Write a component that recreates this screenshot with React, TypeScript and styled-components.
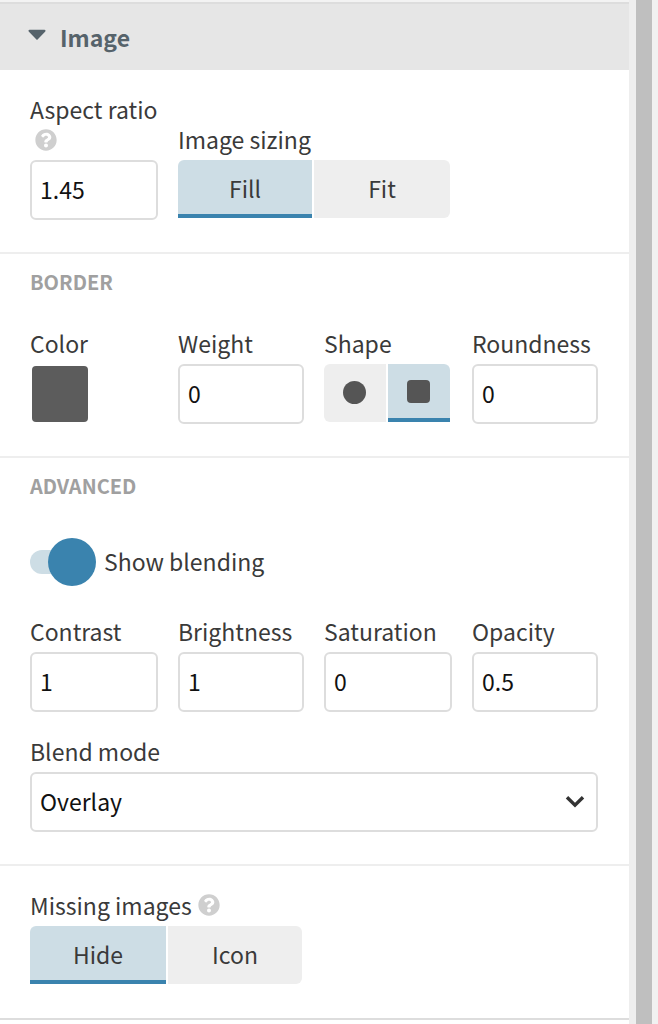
import React from "react";
import styled, { createGlobalStyle } from "styled-components";
import { FaQuestionCircle } from "react-icons/fa";

const Global = createGlobalStyle`
  html, body { margin: 0; padding: 0; background: #f5f5f5; height: 1024px; overflow: hidden; }
  body { font-family: "Noto Sans CJK JP", "Noto Sans", sans-serif; color: #333; }
  * { box-sizing: border-box; }
`;

const Page = styled.div`
  display: flex;
  width: 658px;
  height: 1024px;
  overflow: hidden;
`;

const Panel = styled.div`
  width: 629px;
  flex: none;
  background: #fff;
`;

const Gutter = styled.div`
  width: 7px;
  flex: none;
  background: #eeeeee;
`;

const Scrollbar = styled.div`
  width: 16px;
  flex: none;
  background: #bfbfbf;
`;

const Edge = styled.div`
  flex: 1;
  background: #f1f1f1;
`;

const TopStrip = styled.div`
  height: 4px;
  background: #f3f3f3;
  border-bottom: 2px solid #dddddd;
`;

const Header = styled.div`
  height: 66px;
  background: #e6e6e6;
  display: flex;
  align-items: center;
  padding: 0 0 1px 28px;
  gap: 14px;
  font-size: 23px;
  font-weight: 700;
  color: #56636b;
`;

const Section = styled.div<{ $top: number; $bottom: number; $last?: boolean }>`
  padding: ${(p) => p.$top}px 30px ${(p) => p.$bottom}px;
  border-bottom: 2px solid ${(p) => (p.$last ? "#dddddd" : "#eeeeee")};
`;

const Heading = styled.div`
  font-size: 20px;
  height: 30px;
  line-height: 28px;
  font-weight: 700;
  color: #a0a0a0;
`;

const FieldGrid = styled.div<{ $top?: number }>`
  display: grid;
  grid-template-columns: 128px 126px 128px 126px;
  column-gap: 20px;
  align-items: end;
  margin-top: ${(p) => p.$top ?? 0}px;
`;

const Field = styled.div<{ $span?: number; $top?: number }>`
  display: flex;
  flex-direction: column;
  grid-column: span ${(p) => p.$span ?? 1};
  margin-top: ${(p) => p.$top ?? 0}px;
`;

const Label = styled.div<{ $gap?: number }>`
  font-size: 23px;
  height: 30px;
  padding-bottom: 2px;
  color: #3a3a3a;
  margin-bottom: ${(p) => p.$gap ?? 5}px;
  display: flex;
  align-items: center;
  gap: 6px;
  white-space: nowrap;
`;

const HelpRow = styled.div`
  height: 30px;
  padding-left: 5px;
  margin-bottom: 5px;
  display: flex;
  align-items: center;
`;

const Input = styled.div`
  height: 60px;
  border: 2px solid #dddddd;
  border-radius: 6px;
  background: #fff;
  display: flex;
  align-items: center;
  padding: 0 0 2px 8px;
  font-size: 23px;
  color: #111;
`;

const Swatch = styled.div`
  width: 56px;
  height: 56px;
  margin: 2px 0 2px 2px;
  background: #5c5c5c;
  border-radius: 4px;
`;

const Segmented = styled.div<{ $width: number; $aligned?: boolean }>`
  display: flex;
  gap: 2px;
  width: ${(p) => p.$width}px;
  height: 58px;
  margin-bottom: ${(p) => (p.$aligned ? 2 : 0)}px;
`;

const Segment = styled.div<{ $active?: boolean; $first?: boolean; $grow: number }>`
  flex: ${(p) => p.$grow} 0 0;
  height: 58px;
  display: flex;
  align-items: center;
  justify-content: center;
  font-size: 23px;
  color: #3a3a3a;
  background: ${(p) => (p.$active ? "#cddde5" : "#eeeeee")};
  border-bottom: ${(p) => (p.$active ? "4px solid #3a83ae" : "none")};
  padding: ${(p) => (p.$active ? "2px 0 0" : "0 0 2px")};
  border-radius: ${(p) =>
    p.$first
      ? p.$active
        ? "6px 0 0 0"
        : "6px 0 0 6px"
      : p.$active
        ? "0 6px 0 0"
        : "0 6px 6px 0"};
`;

const Dot = styled.div`
  width: 23px;
  height: 23px;
  margin-right: 1px;
  border-radius: 50%;
  background: #555555;
`;

const Square = styled.div`
  width: 23px;
  height: 23px;
  margin: 0 1px 2px 0;
  border-radius: 4px;
  background: #555555;
`;

const ToggleRow = styled.div`
  display: flex;
  align-items: center;
  margin-top: 36px;
  height: 48px;
`;

const Track = styled.div`
  position: relative;
  width: 50px;
  height: 24px;
  border-radius: 12px;
  background: #cddde5;
`;

const Knob = styled.div`
  position: absolute;
  left: 18px;
  top: -12px;
  width: 48px;
  height: 48px;
  border-radius: 50%;
  background: #3a83ae;
`;

const ToggleLabel = styled.div`
  margin-left: 24px;
  padding-bottom: 3px;
  font-size: 23px;
  color: #3a3a3a;
`;

const Select = styled.div`
  height: 60px;
  border: 2px solid #dddddd;
  border-radius: 6px;
  display: flex;
  align-items: center;
  justify-content: space-between;
  padding: 0 11px 2px 8px;
  font-size: 23px;
  color: #111;
`;

const Help = () => <FaQuestionCircle size={22} color="#cfcfcf" />;

const Caret = () => (
  <svg width="18" height="11" viewBox="0 0 18 11" style={{ marginBottom: 4 }}>
    <path d="M1.5 0.8h15a1 1 0 0 1 .8 1.6l-7.5 7.8a1 1 0 0 1-1.6 0L.7 2.4a1 1 0 0 1 .8-1.6z" fill="#56636b" />
  </svg>
);

const Chevron = () => (
  <svg width="20" height="13" viewBox="0 0 20 13">
    <path d="M2 2.2l8 8 8-8" fill="none" stroke="#333" strokeWidth="3.4" />
  </svg>
);

export default function App() {
  return (
    <Page>
      <Global />
      <Panel>
        <TopStrip />
        <Header>
          <Caret />
          Image
        </Header>

        <Section $top={25} $bottom={32}>
          <FieldGrid>
            <Field>
              <Label $gap={0}>Aspect ratio</Label>
              <HelpRow>
                <Help />
              </HelpRow>
              <Input>1.45</Input>
            </Field>
            <Field $span={3}>
              <Label>Image sizing</Label>
              <Segmented $width={272} $aligned>
                <Segment $active $first $grow={134}>Fill</Segment>
                <Segment $grow={136}>Fit</Segment>
              </Segmented>
            </Field>
          </FieldGrid>
        </Section>

        <Section $top={14} $bottom={32}>
          <Heading>BORDER</Heading>
          <FieldGrid $top={31}>
            <Field>
              <Label>Color</Label>
              <Swatch />
            </Field>
            <Field>
              <Label>Weight</Label>
              <Input>0</Input>
            </Field>
            <Field>
              <Label>Shape</Label>
              <Segmented $width={126} $aligned>
                <Segment $first $grow={62}><Dot /></Segment>
                <Segment $active $grow={62}><Square /></Segment>
              </Segmented>
            </Field>
            <Field>
              <Label>Roundness</Label>
              <Input>0</Input>
            </Field>
          </FieldGrid>
        </Section>

        <Section $top={14} $bottom={32}>
          <Heading>ADVANCED</Heading>
          <ToggleRow>
            <Track>
              <Knob />
            </Track>
            <ToggleLabel>Show blending</ToggleLabel>
          </ToggleRow>
          <FieldGrid $top={31}>
            <Field>
              <Label>Contrast</Label>
              <Input>1</Input>
            </Field>
            <Field>
              <Label>Brightness</Label>
              <Input>1</Input>
            </Field>
            <Field>
              <Label>Saturation</Label>
              <Input>0</Input>
            </Field>
            <Field>
              <Label>Opacity</Label>
              <Input>0.5</Input>
            </Field>
            <Field $span={4} $top={25}>
              <Label>Blend mode</Label>
              <Select>
                Overlay
                <Chevron />
              </Select>
            </Field>
          </FieldGrid>
        </Section>

        <Section $top={25} $bottom={34} $last>
          <Label>
            Missing images
            <Help />
          </Label>
          <Segmented $width={272}>
            <Segment $active $first $grow={136}>Hide</Segment>
            <Segment $grow={134}>Icon</Segment>
          </Segmented>
        </Section>
      </Panel>
      <Gutter />
      <Scrollbar />
      <Edge />
    </Page>
  );
}
